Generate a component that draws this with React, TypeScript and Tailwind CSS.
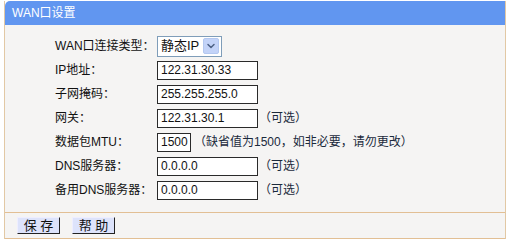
import { ChevronDown } from "lucide-react";

const font = "font-['Liberation_Sans','Noto_Sans_CJK_SC',sans-serif]";

interface FieldRowProps {
  label: string;
  value: string;
  note?: string;
  narrow?: boolean;
}

// One label + text box row of the WAN form
function FieldRow({ label, value, note, narrow }: FieldRowProps) {
  return (
    <div className="flex items-center h-[24px]">
      <div className="w-[102px] shrink-0 text-[12px] text-[#111]">{label}</div>
      <input
        readOnly
        defaultValue={value}
        className={`${narrow ? "w-[34px]" : "w-[101px]"} h-[19px] border border-[#2a2a2a] bg-white pl-[3px] text-[12px] text-[#111] outline-none ${font}`}
      />
      {note && (
        <span className={`text-[12px] text-[#1b2a3c] ${narrow ? "ml-[3px]" : "ml-[1px]"}`}>{note}</span>
      )}
    </div>
  );
}

export default function App() {
  return (
    <div className={`w-[508px] h-[243px] bg-white pt-px pl-[4px] pr-[2px] ${font}`}>
      <div className="border-l border-r border-[#e2c8a4]">
        {/* Title bar */}
        <div className="h-[24px] bg-[#6196f0] rounded-tl-[5px] flex items-center pl-[7px] text-[12px] text-white">
          WAN口设置
        </div>

        {/* Form */}
        <div className="bg-[#f5f4f3] pt-[9px] pb-[10px] pl-[50px]">
          <div className="flex items-center h-[24px]">
            <div className="w-[102px] shrink-0 text-[12px] text-[#111]">WAN口连接类型：</div>
            <div className="flex items-center h-[21px] border border-[#7f9db9] bg-white pl-[3px] pr-[2px]">
              <span className="text-[13px] text-[#111] mr-[4px]">静态IP</span>
              <div className="w-[16px] h-[16px] bg-[#c3d3f8] border border-[#b4c8f0] rounded-[2px] flex items-center justify-center">
                <ChevronDown size={12} strokeWidth={3} className="text-[#4d6185]" />
              </div>
            </div>
          </div>
          <FieldRow label="IP地址：" value="122.31.30.33" />
          <FieldRow label="子网掩码：" value="255.255.255.0" />
          <FieldRow label="网关：" value="122.31.30.1" note="（可选）" />
          <FieldRow label="数据包MTU：" value="1500" narrow note="（缺省值为1500，如非必要，请勿更改）" />
          <FieldRow label="DNS服务器：" value="0.0.0.0" note="（可选）" />
          <FieldRow label="备用DNS服务器：" value="0.0.0.0" note="（可选）" />
        </div>

        {/* Buttons */}
        <div className="h-[27px] bg-[#f5f4f3] border-t border-b border-[#e2bf94] flex items-center gap-[12px] pl-[12px]">
          <button className="w-[43px] h-[17px] bg-[#dde3fb] border border-t-[#eef] border-l-[#eef] border-r-[#222] border-b-[#222] text-[13px] leading-none text-[#111]">
            保 存
          </button>
          <button className="w-[43px] h-[17px] bg-[#dde3fb] border border-t-[#eef] border-l-[#eef] border-r-[#222] border-b-[#222] text-[13px] leading-none text-[#111]">
            帮 助
          </button>
        </div>
      </div>
    </div>
  );
}
